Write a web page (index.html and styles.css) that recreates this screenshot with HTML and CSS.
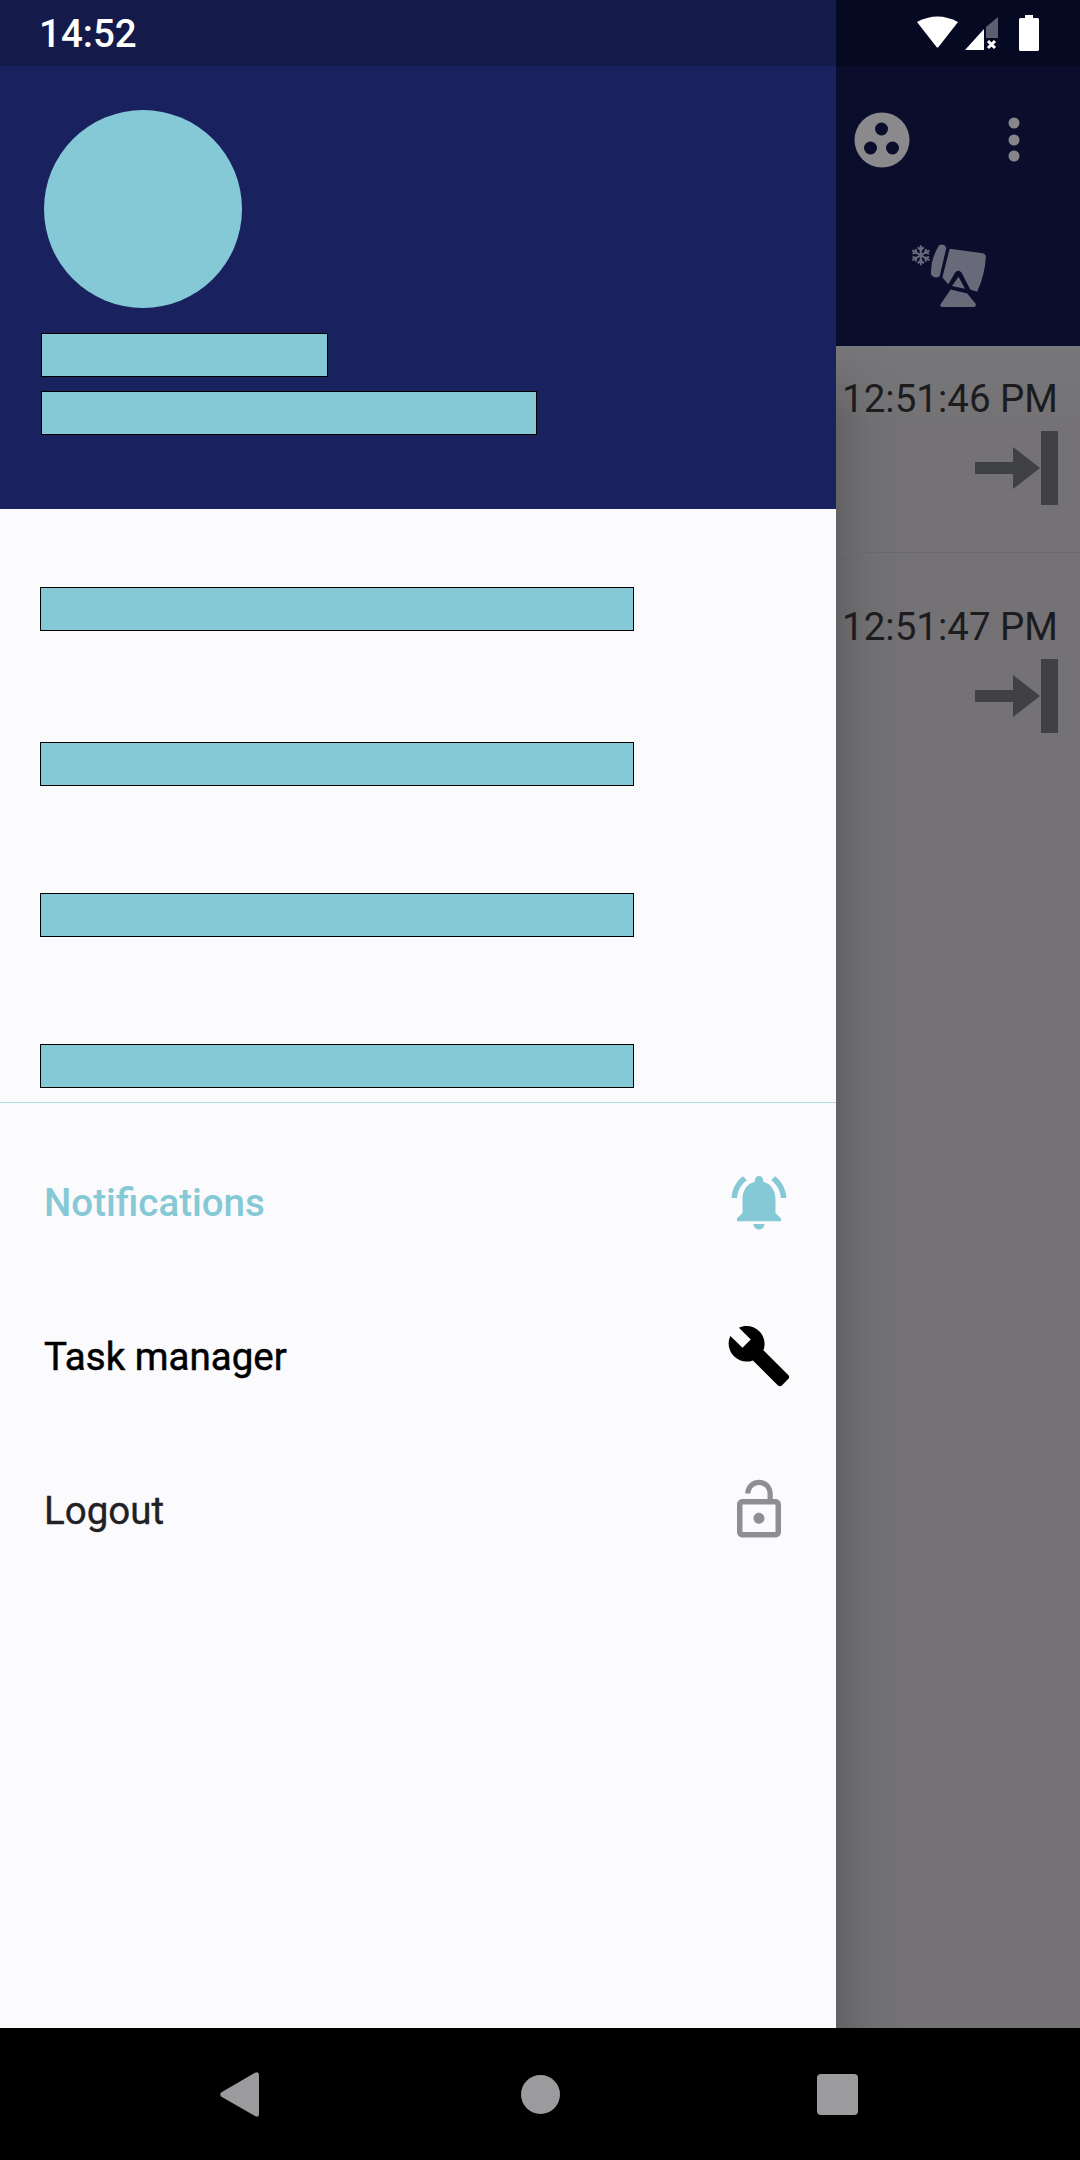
FILE: index.html
```html
<!DOCTYPE html>
<html lang="en">
<head>
<meta charset="utf-8">
<title>Drawer</title>
<link rel="stylesheet" href="styles.css">
</head>
<body>
<div class="screen">
  <div class="main">
    <aside class="drawer">
      <div class="drawer-status"><span class="clock">14:52</span></div>
      <header class="profile">
        <div class="avatar"></div>
        <div class="profile-bar profile-bar-short"></div>
        <div class="profile-bar profile-bar-long"></div>
      </header>
      <div class="sections">
        <div class="section-bar section-bar-first"></div>
        <div class="section-bar"></div>
        <div class="section-bar"></div>
        <div class="section-bar"></div>
      </div>
      <nav class="menu">
        <div class="menu-row menu-active">
          <span class="menu-label">Notifications</span>
          <svg class="menu-icon" viewBox="0 0 24 24"><path d="M7.58 4.08L6.15 2.65C3.75 4.48 2.17 7.3 2.03 10.5h2c.15-2.65 1.51-4.97 3.55-6.42zm12.39 6.42h2c-.15-3.2-1.73-6.02-4.12-7.85l-1.42 1.43c2.02 1.45 3.39 3.77 3.54 6.42zM18 11c0-3.07-1.64-5.64-4.5-6.32V4c0-.83-.67-1.5-1.5-1.5s-1.5.67-1.5 1.5v.68C7.63 5.36 6 7.92 6 11v5l-2 2v1h16v-1l-2-2v-5zm-6 11c.14 0 .27-.01.4-.04.65-.14 1.18-.58 1.44-1.18.1-.24.15-.5.15-.78h-4c.01 1.1.9 2 2.01 2z"/></svg>
        </div>
        <div class="menu-row menu-task">
          <span class="menu-label">Task manager</span>
          <svg class="menu-icon" viewBox="0 0 24 24"><path d="M22.7 19l-9.1-9.1c.9-2.3.4-5-1.5-6.9-2-2-5-2.4-7.4-1.3L9 6 6 9 1.6 4.7C.4 7.1.9 10.1 2.9 12.1c1.9 1.9 4.6 2.4 6.9 1.5l9.1 9.1c.4.4 1 .4 1.4 0l2.3-2.3c.5-.4.5-1.1.1-1.4z"/></svg>
        </div>
        <div class="menu-row menu-logout">
          <span class="menu-label">Logout</span>
          <svg class="menu-icon" viewBox="0 0 24 24"><path d="M12 17c1.1 0 2-.9 2-2s-.9-2-2-2-2 .9-2 2 .9 2 2 2zm6-9h-1V6c0-2.76-2.24-5-5-5S7 3.24 7 6h1.9c0-1.71 1.39-3.1 3.1-3.1 1.71 0 3.1 1.39 3.1 3.1v2H6c-1.1 0-2 .9-2 2v10c0 1.1.9 2 2 2h12c1.1 0 2-.9 2-2V10c0-1.1-.9-2-2-2zm0 12H6V10h12v10z"/></svg>
        </div>
      </nav>
    </aside>

    <section class="behind">
      <div class="behind-status">
        <svg class="ic-wifi" viewBox="0 0 41 32"><path d="M0 6Q20.500-5 41 6L21.500 31Q20.500 32 19.500 31Z"/></svg>
        <svg class="ic-signal" viewBox="0 0 33 33">
          <path class="signal-dim" d="M21 10L33 0V21H21Z"/>
          <path d="M0 33L19 12V33Z"/>
          <path class="signal-x" d="M23 24l7 7M30 24l-7 7"/>
        </svg>
        <svg class="ic-battery" viewBox="0 0 20 36"><path d="M6 0H14V3H18.500Q20 3 20 4.500V34.500Q20 36 18.500 36H1.500Q0 36 0 34.500V4.500Q0 3 1.500 3H6Z"/></svg>
      </div>
      <div class="toolbar">
        <div class="toolbar-actions">
          <svg class="ic-reel" viewBox="0 0 56 56">
            <circle class="reel-disc" cx="28" cy="28" r="27.500"/>
            <circle class="reel-hole" cx="27.500" cy="17" r="6.500"/>
            <circle class="reel-hole" cx="16.500" cy="36" r="6.500"/>
            <circle class="reel-hole" cx="38.500" cy="36" r="6.500"/>
          </svg>
          <svg class="ic-more" viewBox="0 0 12 46">
            <circle cx="6" cy="6" r="5.500"/>
            <circle cx="6" cy="23" r="5.500"/>
            <circle cx="6" cy="39" r="5.500"/>
          </svg>
        </div>
        <svg class="ic-scope" viewBox="240 725 240 205">
          <g class="flake">
            <path d="M275 735V795M249 750L301 780M249 780L301 750"/>
            <path d="M266 741L275 750L284 741M266 789L275 780L284 789M250 760L262 757L259 746M300 770L288 773L291 784M250 770L262 773L259 784M300 760L288 757L291 746"/>
          </g>
          <path d="M330 735Q344 727 352 742L332 828Q318 838 306 824Q303 780 330 735Z"/>
          <path d="M362 745L462 759Q472 761 471 772Q468 825 445 875L424 868L398 818Q388 806 378 818L358 852L340 832Z"/>
          <path d="M389 830L408 866L369 858Z"/>
          <path d="M365 868L415 880L441 912Q442 921 434 921H340Q331 921 335 912Z"/>
        </svg>
      </div>
      <div class="log">
        <div class="log-row log-row-first">
          <span class="log-time">12:51:46 PM</span>
          <svg class="ic-end" viewBox="0 0 84 74"><path d="M1 31H39V16L66 37L39 58V43H1ZM67 0H84V74H67Z"/></svg>
        </div>
        <div class="log-row">
          <span class="log-time">12:51:47 PM</span>
          <svg class="ic-end" viewBox="0 0 84 74"><path d="M1 31H39V16L66 37L39 58V43H1ZM67 0H84V74H67Z"/></svg>
        </div>
      </div>
    </section>
  </div>

  <footer class="navbar">
    <svg class="nav-back" viewBox="0 0 39 45"><path d="M1 20.500L35 .8Q39-1 39 3V42Q39 46 35 44L1 24.500Q-.5 22.500 1 20.500Z"/></svg>
    <svg class="nav-home" viewBox="0 0 39 39"><circle cx="19.500" cy="19.500" r="19.500"/></svg>
    <div class="nav-recent"></div>
  </footer>
</div>
</body>
</html>
```

FILE: styles.css
```css
* { box-sizing: border-box; }

html, body { margin: 0; padding: 0; }

body {
  width: 1080px;
  height: 2160px;
  overflow: hidden;
  font-family: Roboto, "Liberation Sans", sans-serif;
  background: #000;
}

svg { display: block; flex: none; }

.screen { display: flex; flex-direction: column; height: 2160px; }
.main { display: flex; height: 2028px; }

/* Drawer */
.drawer {
  width: 836px;
  flex: none;
  display: flex;
  flex-direction: column;
  background: #fbfafc;
}

.drawer-status {
  height: 66px;
  padding: 1px 0 0 39px;
  display: flex;
  align-items: center;
  background: #141a49;
}

.clock {
  color: #fff;
  font-size: 38.5px;
  font-weight: 500;
  line-height: 64px;
}

.profile {
  height: 443px;
  padding-top: 44px;
  background: #19215e;
}

.avatar {
  width: 198px;
  height: 198px;
  margin: 0 0 25px 44px;
  border-radius: 50%;
  background: #85c9d7;
}

.profile-bar {
  height: 44px;
  margin-left: 41px;
  background: #85c9d7;
  border: 1px solid #000;
}
.profile-bar-short { width: 287px; margin-bottom: 14px; }
.profile-bar-long { width: 496px; }

.sections {
  height: 594px;
  padding: 78px 0 0 40px;
  display: flex;
  flex-direction: column;
  gap: 107px;
  border-bottom: 1.500px solid #aedbe3;
}

.section-bar {
  width: 594px;
  height: 44px;
  flex: none;
  background: #85c9d7;
  border: 1px solid #000;
}
.section-bar-first { margin-bottom: 4px; }

.menu { padding-top: 22px; }

.menu-row {
  height: 154px;
  padding: 0 44px;
  display: flex;
  align-items: center;
  justify-content: space-between;
}

.menu-label { font-size: 38.5px; font-weight: 500; }
.menu-icon { width: 66px; height: 66px; }

.menu-active { color: #85c9d7; }
.menu-active .menu-icon { fill: #85c9d7; }
.menu-task { color: #000; }
.menu-task .menu-label { font-weight: 400; -webkit-text-stroke: 0.5px #000; }
.menu-task .menu-icon { fill: #000; }
.menu-logout { color: #212023; }
.menu-logout .menu-label { font-weight: 400; -webkit-text-stroke: 0.35px #212023; }
.menu-logout .menu-icon { fill: #8f8e91; }

/* Dimmed screen behind the drawer */
.behind {
  flex: 1;
  min-width: 0;
  display: flex;
  flex-direction: column;
  background: #0a0d2c;
}

.behind-status {
  height: 66px;
  padding-left: 81px;
  display: flex;
  align-items: flex-start;
  background: #060922;
}

.ic-wifi { width: 41px; height: 32px; margin-top: 16px; fill: #fff; }
.ic-signal { width: 33px; height: 33px; margin: 17px 0 0 7px; fill: #fff; }
.signal-dim { fill: #5c5f70; }
.signal-x { fill: none; stroke: #fff; stroke-width: 3; }
.ic-battery { width: 20px; height: 36px; margin: 15px 0 0 21px; fill: #fff; }

.toolbar {
  height: 280px;
  padding-top: 46px;
  background: #0a0d2c;
}

.toolbar-actions { display: flex; align-items: flex-start; padding-left: 18px; }

.ic-reel { width: 56px; height: 56px; }
.reel-disc { fill: #8a8a8c; }
.reel-hole { fill: #0a0d2c; }

.ic-more { width: 12px; height: 46px; margin: 5px 0 0 98px; fill: #87878b; }

.ic-scope {
  width: 80px;
  height: 68px;
  margin: 74px 0 0 73px;
  fill: #686a79;
}
.flake { fill: none; stroke: #686a79; stroke-width: 6; }

.log {
  flex: 1;
  background: linear-gradient(90deg, #626164, #6f6e71 32px, #747275 70px);
}

.log-row {
  display: flex;
  flex-direction: column;
  align-items: flex-end;
  padding: 51px 22px 0 0;
}

.log-row-first {
  height: 207px;
  padding-top: 30px;
  border-bottom: 1px solid #69686b;
  background: linear-gradient(180deg, #77777a, rgba(116, 114, 117, 0) 80px);
}

.log-time {
  color: #1c1c1e;
  font-size: 38.5px;
  line-height: 45px;
  white-space: nowrap;
}

.ic-end { width: 84px; height: 74px; margin-top: 10px; fill: #3f4143; }

/* System navigation */
.navbar {
  height: 132px;
  padding-left: 220px;
  display: grid;
  grid-template-columns: 301px 296px 41px;
  align-items: center;
  background: #000;
}

.nav-back { width: 39px; height: 45px; fill: #9b9a9d; }
.nav-home { width: 39px; height: 39px; fill: #9b9a9d; }
.nav-recent { width: 41px; height: 41px; border-radius: 4px; background: #9b9a9d; }
```
